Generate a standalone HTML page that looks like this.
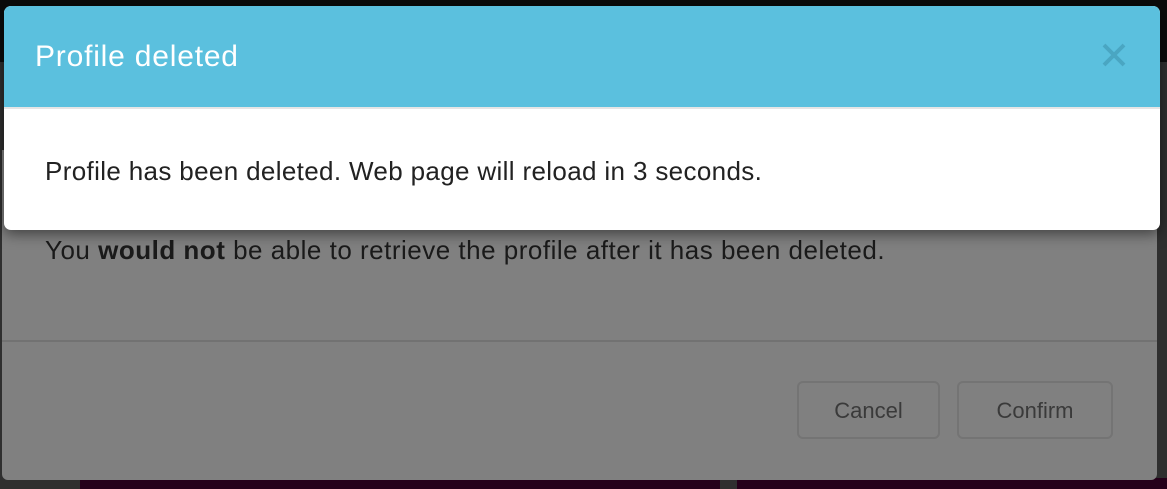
<!DOCTYPE html>
<html><head><style>
html,body{margin:0;padding:0;width:1167px;height:489px;overflow:hidden;background:#2f2f2f;font-family:"Liberation Sans",sans-serif;position:relative}
.top{position:absolute;left:0;top:0;width:1167px;height:62px;background:#0b0b0b}
.purp1{position:absolute;left:80px;top:478px;width:640px;height:11px;background:#25001a}
.purp2{position:absolute;left:737px;top:478px;width:430px;height:11px;background:#25001a}
.under{position:absolute;left:2px;top:150px;width:1155px;height:330px;background:#808080;border-radius:0 0 6px 6px}
.utext{position:absolute;left:45px;top:235px;font-size:26px;color:#1a1a1a;letter-spacing:0.5px;white-space:nowrap}
.div{position:absolute;left:2px;top:340px;width:1155px;height:2px;background:#727272}
.btn{position:absolute;top:381px;height:58px;border:2px solid #747474;border-radius:6px;box-sizing:border-box;color:#3a3a3a;font-size:22px;line-height:56px;text-align:center}
.modal{position:absolute;left:4px;top:6px;width:1156px;height:224px;border-radius:7px;overflow:hidden;background:#fff;box-shadow:0 4px 14px rgba(0,0,0,.5)}
.hdr{height:101px;background:#5bc0de;border-bottom:2px solid #e5e5e5}
.title{position:absolute;left:31px;top:34px;font-size:30px;color:#fff;letter-spacing:0.8px}
.x{position:absolute;left:1095px;top:34px;width:30px;height:30px}
.msg{position:absolute;left:41px;top:150px;font-size:26px;color:#222;letter-spacing:0.35px;white-space:nowrap}
</style></head><body>
<div class="top"></div>
<div class="purp1"></div><div class="purp2"></div>
<div class="under"></div>
<div class="utext">You <b>would not</b> be able to retrieve the profile after it has been deleted.</div>
<div class="div"></div>
<div class="btn" style="left:797px;width:143px">Cancel</div>
<div class="btn" style="left:957px;width:156px">Confirm</div>
<div class="modal">
<div class="hdr"></div>
<div class="title">Profile deleted</div>
<svg class="x" viewBox="0 0 30 30"><path d="M5 5L25 25M25 5L5 25" stroke="#4aa6c2" stroke-width="4"/></svg>
<div class="msg">Profile has been deleted. Web page will reload in 3 seconds.</div>
</div>
</body></html>
